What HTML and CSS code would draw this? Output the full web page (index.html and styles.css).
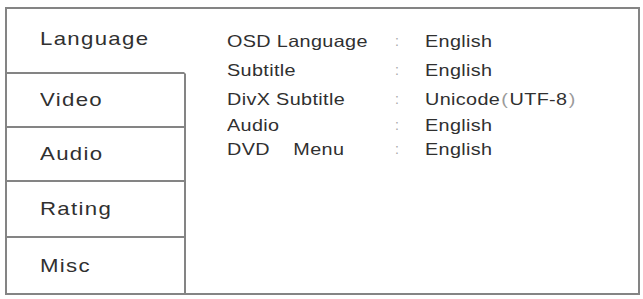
FILE: index.html
```html
<!DOCTYPE html>
<html>
<head>
<meta charset="utf-8">
<link rel="stylesheet" href="styles.css">
</head>
<body>
<div class="frame">
  <div class="sidebar">
    <div class="tab tab-active tab-language"><span class="wide">Language</span></div>
    <div class="tab tab-video"><span class="wide">Video</span></div>
    <div class="tab tab-audio"><span class="wide">Audio</span></div>
    <div class="tab tab-rating"><span class="wide">Rating</span></div>
    <div class="tab tab-misc"><span class="wide">Misc</span></div>
  </div>
  <div class="content">
    <div class="settings">
      <div class="label"><span class="wide">OSD Language</span></div><div class="colon">:</div><div class="value"><span class="wide">English</span></div>
      <div class="label"><span class="wide">Subtitle</span></div><div class="colon">:</div><div class="value"><span class="wide">English</span></div>
      <div class="label"><span class="wide">DivX Subtitle</span></div><div class="colon">:</div><div class="value"><span class="wide">Unicode<span class="paren">(</span>UTF-8<span class="paren">)</span></span></div>
      <div class="label"><span class="wide">Audio</span></div><div class="colon">:</div><div class="value"><span class="wide">English</span></div>
      <div class="label"><span class="wide">DVD&nbsp;&nbsp;&nbsp;&nbsp;Menu</span></div><div class="colon">:</div><div class="value"><span class="wide">English</span></div>
    </div>
  </div>
</div>
</body>
</html>
```

FILE: styles.css
```css
html, body {
  margin: 0;
  padding: 0;
  background: #ffffff;
}

body {
  font-family: "Liberation Sans", Arial, sans-serif;
  color: #303030;
}

.wide {
  display: inline-block;
  transform: scaleX(1.2);
  transform-origin: left center;
  white-space: nowrap;
}

.frame {
  margin: 7px 0 0 5px;
  width: 635px;
  height: 288px;
  box-sizing: border-box;
  border: 2px solid #848484;
  display: flex;
}

.sidebar {
  width: 179px;
  display: flex;
  flex-direction: column;
}

.tab {
  box-sizing: border-box;
  display: flex;
  align-items: center;
  padding-left: 33px;
  font-size: 18.5px;
  letter-spacing: 1.1px;
  border-right: 2px solid #848484;
  border-bottom: 2px solid #848484;
}

.tab-active {
  border-right-color: transparent;
}

.tab-language { height: 65px; padding-bottom: 4px; }
.tab-video { height: 54px; }
.tab-audio { height: 54px; }
.tab-rating { height: 56px; }
.tab-misc { flex: 1; border-bottom: none; }

.content {
  flex: 1;
  padding: 22px 0 0 41px;
}

.settings {
  display: grid;
  grid-template-columns: 168px 30px auto;
  grid-template-rows: 29px 28.5px 26.5px 23.5px 20px;
  line-height: 20px;
  font-size: 16.5px;
  letter-spacing: 0.3px;
}

.label {
  white-space: nowrap;
}

.colon {
  color: #a8a8a8;
  font-size: 14px;
}

.value {
  white-space: nowrap;
}

.paren {
  color: #9a9a9a;
  padding: 0 1px;
}
```
